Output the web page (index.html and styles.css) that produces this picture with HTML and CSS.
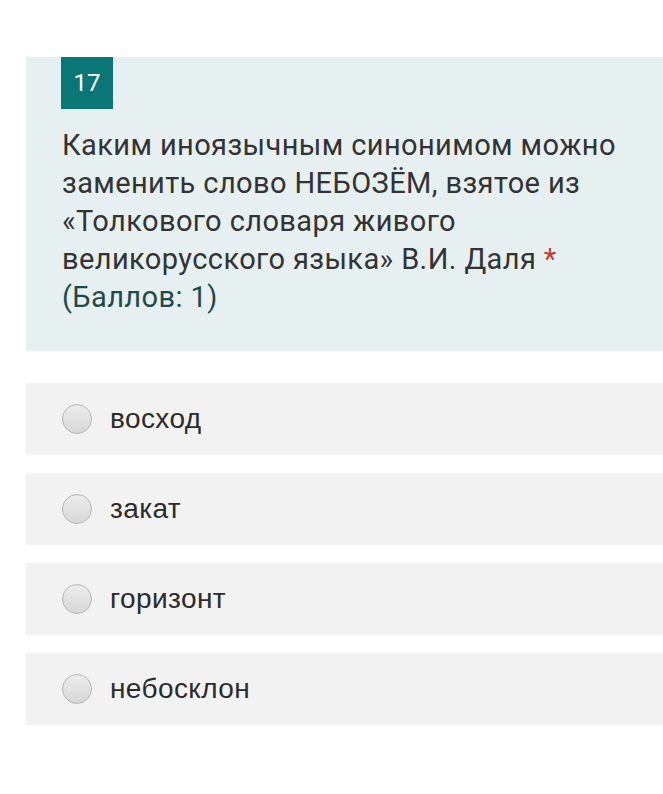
FILE: index.html
```html
<!DOCTYPE html>
<html lang="ru">
<head>
<meta charset="utf-8">
<link rel="stylesheet" href="styles.css">
</head>
<body>
<div class="page">
  <section class="question">
    <div class="badge">17</div>
    <p class="qtext">Каким иноязычным синонимом можно заменить слово НЕБОЗЁМ, взятое из «Толкового словаря живого великорусского языка» В.И. Даля&nbsp;<span class="req">*</span><br><span class="points">(Баллов: 1)</span></p>
  </section>
  <div class="options">
    <label class="option"><span class="radio"></span><span class="otext">восход</span></label>
    <label class="option"><span class="radio"></span><span class="otext">закат</span></label>
    <label class="option"><span class="radio"></span><span class="otext">горизонт</span></label>
    <label class="option"><span class="radio"></span><span class="otext">небосклон</span></label>
  </div>
</div>
</body>
</html>
```

FILE: styles.css
```css
* { box-sizing: border-box; }
html, body { margin: 0; padding: 0; background: #ffffff; }
.page {
  padding: 57px 0 0 26px;
}
.question {
  background: #e7f0f1;
  padding: 0 20px 0 35px;
  height: 294px;
}
.badge {
  width: 52px;
  height: 52px;
  background: #0b7676;
  color: #ffffff;
  font-family: Roboto, sans-serif;
  font-size: 24px;
  display: flex;
  align-items: center;
  justify-content: center;
}
.qtext {
  margin: 17px 0 0 1px;
  font-family: Roboto, sans-serif;
  font-size: 29px;
  letter-spacing: 0.4px;
  line-height: 38px;
  color: #333333;
}
.req { color: #c0392b; }
.points { color: #1e4a4a; }
.options {
  margin-top: 32px;
  display: flex;
  flex-direction: column;
  gap: 18px;
}
.option {
  background: #f2f2f2;
  height: 72px;
  display: flex;
  align-items: center;
  padding-left: 36px;
}
.radio {
  width: 30px;
  height: 30px;
  border-radius: 50%;
  border: 1px solid #b5b5b5;
  background: linear-gradient(#ececec, #d8d8d8);
  flex: none;
}
.otext {
  margin-left: 18px;
  font-family: "Liberation Sans", Arial, sans-serif;
  font-size: 28px;
  letter-spacing: 0.4px;
  color: #2b2b2b;
}
```
